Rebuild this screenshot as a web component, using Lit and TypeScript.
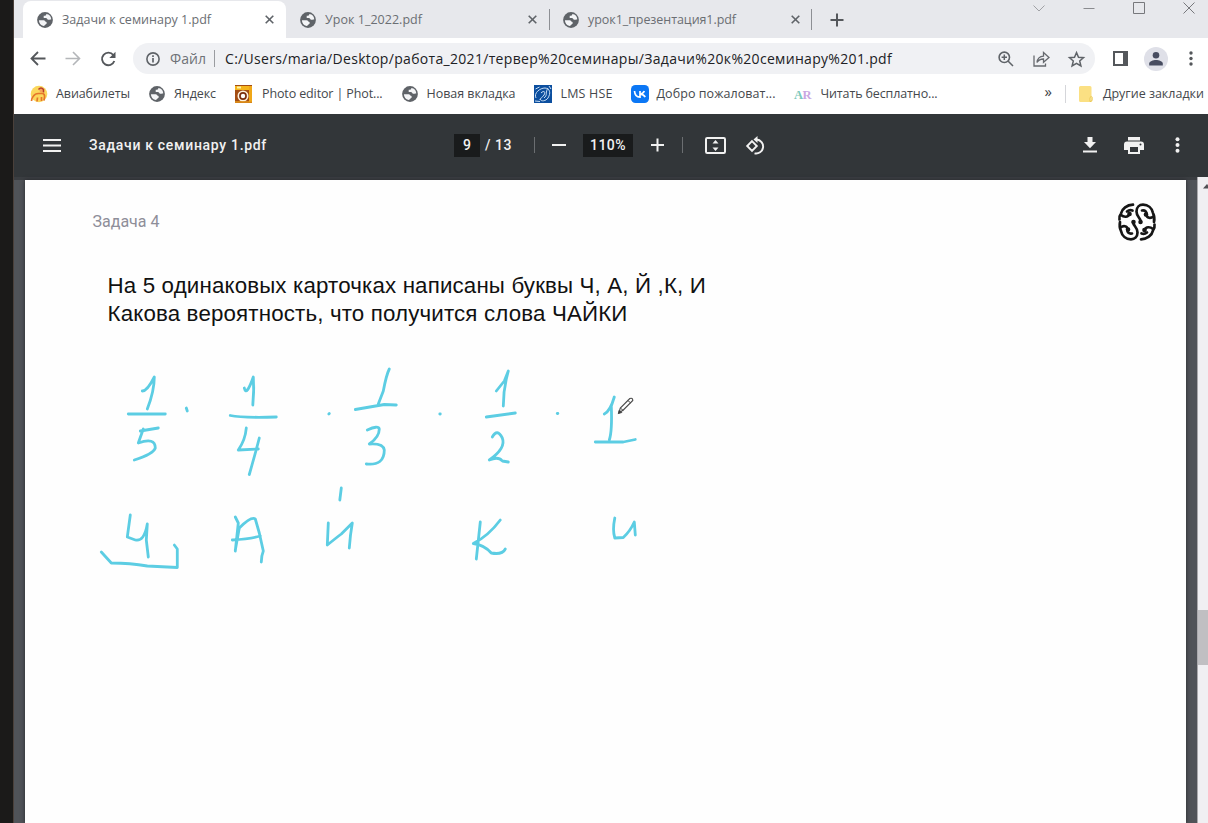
import { LitElement, html, svg, css } from "lit";
import { customElement, property } from "lit/decorators.js";

/* One line of text, letter-spaced so that it takes the given width. */
@customElement("fit-text")
class FitText extends LitElement {
  @property({ type: Number }) width = 0;
  @property() text = "";
  static styles = css`
    :host { display: block; white-space: pre; flex: none; }
    .line { display: inline-block; }
  `;
  render() {
    return html`<span class="line">${this.text}</span>`;
  }
  updated() {
    const line = this.renderRoot.querySelector(".line") as HTMLElement;
    line.style.letterSpacing = "0px";
    const natural = line.getBoundingClientRect().width;
    line.style.letterSpacing = (this.width - natural) / this.text.length + "px";
    this.style.width = this.width + "px";
  }
}

const fit = (text: string, width: number, cls = "") =>
  html`<fit-text class=${cls} text=${text} width=${width}></fit-text>`;

const globe = html`<svg class="globe" width="16" height="16" viewBox="0 0 16 16">
  <circle cx="8" cy="8" r="7.9" fill="#5f6368" />
  <path d="M1.9 8.2H6.6c1.6 0 1.6 1.9 3 1.9v1.7c-1.5.1-1.4 2.2-3 2.2A6.2 6.2 0 0 1 1.9 8.2z" fill="#f4f5f7" />
  <path d="M9.3 2c0 1.6-.8 1.8-2.6 1.8v2.1h2.2c1.2 0 1.2 1.7 2.4 1.9 1 .2 1.300-.6 2.900-.2C14.300 4.600 12.200 2.300 9.300 2z" fill="#f4f5f7" />
</svg>`;

const cross = html`<svg width="9" height="9" viewBox="0 0 9 9">
  <path d="M.7.7l7.600 7.600M8.300.7L.7 8.300" stroke="#5f6368" stroke-width="1.600" />
</svg>`;

const aviaIcon = html`<svg width="17" height="18" viewBox="0 0 17 18">
  <circle cx="9" cy="9" r="8.300" fill="#fbd75c" />
  <circle cx="11.500" cy="5.500" r="2" fill="#f6a45a" />
  <path d="M8.500 4.500q2.500-3 5 0v3" fill="none" stroke="#b8392b" stroke-width="1.500" />
  <path d="M1.500 16q0-3 2-5 1.500-2.500 5-2.500h3.500q3 0 2.500 4l-.5 3M7 16.500l.5-4M11.500 16v-4" fill="none" stroke="#e5762a" stroke-width="1.700" />
</svg>`;

const cameraIcon = html`<svg width="17" height="18" viewBox="0 0 17 18">
  <rect width="17" height="18" fill="#a44d12" />
  <rect y="1" width="17" height="4" fill="#f5b51b" />
  <rect x="2" y="1.500" width="4" height="2" fill="#fff2a8" />
  <rect x="14" y="1" width="3" height="16" fill="#f0a718" />
  <circle cx="8" cy="11" r="4.700" fill="#7c3010" stroke="#fff3df" stroke-width="1.600" />
  <circle cx="8" cy="11" r="2.200" fill="#fff" />
  <path d="M0 17h17" stroke="#e79a1c" stroke-width="1.500" />
</svg>`;

const hseIcon = html`<svg width="18" height="18" viewBox="0 0 18 18">
  <rect width="18" height="18" fill="#0c4f9f" />
  <path d="M2 13C-.5 8 6 3 11 3c5 .5 6 5 3 10-2 3-7 4-8 1M7 8c3-3 5-1 3 2s-4 3-4 5M14 3c-3 4 0 7-4 10M1.500 4l4-2M15 1l2 3M1 16l5 .5" fill="none" stroke="#c9def4" stroke-width="1" />
</svg>`;

const vkIcon = html`<svg width="18" height="18" viewBox="0 0 18 18">
  <rect width="18" height="18" rx="4.500" fill="#0b77f5" />
  <path d="M3.500 6c.3 4 2.200 6.200 5.500 6.200V6M9 9.200C11 9 12.500 8 13.300 6M9.300 9.200c2.200.2 3.900 1.200 4.900 3" fill="none" stroke="#fff" stroke-width="1.700" />
</svg>`;

const arIcon = html`<svg width="18" height="14" viewBox="0 0 18 14">
  <text class="ar" x="0" y="11.500" fill="#7bc9bb">A</text>
  <text class="ar" x="8.500" y="11.500" fill="#c9a6e2">R</text>
</svg>`;

/* The mark is symmetric under a half turn, so one half is drawn twice. */
const lobe = () => svg`
  <path d="M15 1.700C9 2 4 5.500 3 10.500Q1 13 1.500 16.500" />
  <path d="M3 12C6 14.500 10 14.500 11.500 11M9 8.500Q11.500 6.500 14.500 7.500" />
  <path d="M23 19C22.500 14.500 18.500 14 18.500 8.500C18.500 4 21.500 1.700 25 1.700C30 1.700 34 5 35 10Q37 14 36 19" />
  <path d="M24 7.500C27 7 29 8.500 28.500 11.500C28.500 15.500 33 15.500 35.500 13.500" />
  <circle cx="11.500" cy="11" r="1" />
  <circle cx="28" cy="11.500" r="1" />
  <circle cx="22.500" cy="19" r=".9" />`;
const logo = html`<svg class="logo" width="38" height="38" viewBox="0 0 38 38">
  <g fill="none" stroke="#161616" stroke-width="2.700" stroke-linecap="round">
    ${lobe()}
    <g transform="rotate(180 19 19)">${lobe()}</g>
  </g>
</svg>`;

/* Pen strokes, in the coordinates of the sheet's ink layer. */
const strokes = [
  "M142 391Q147 391 154 377Q154 391 147 409", "M128 414H165", "M140 431L158 428M143 429L138 443Q155 437 155 448Q153 454 134 460",
  "M186 408L187 411", "M244 388Q246 397 253 377Q254 390 252.500 405", "M230 415.500Q242 418 276 417",
  "M246 428Q245 440 238 450L258 449M259 438Q256 450 249 474.500", "M328.500 414L329 413.500",
  "M389 369Q386 375 383 391L378 404", "M355 409.500L384 404.500L396 405",
  "M367 430Q378 425 379 429Q379 437 369 444Q383 443 384 450Q384 466 366 464", "M439.500 414H440",
  "M496 391L504 381L508 371L506 379Q503 392 503 406", "M486 417L515 413",
  "M492 437Q497 428 502 438Q506 448 489 460Q498 456 502 461L508 462", "M557 413.500H557.500",
  "M604 414Q610 411 614 397L611 406Q612 431 609 440", "M595 442L623 442L635 439.500",
  "M130 515Q128 530 127 537L135 540Q144 542 147 524L146 540L148 557", "M101 552L111 563Q130 563 147 566L177 567.500V549L174 545",
  "M235 517L238 523L235 551M235 550L239 528Q251 516 255 519L259 533L263 551Q261 556 261 562M232 540Q250 539 260 536",
  "M341 488L339.500 500", "M328 523L327 545Q337 537 341 534L352 523Q350 534 349 548",
  "M480 522L476 559M500 520Q488 536 473 543.500Q484 545 491 553Q502 555 505 549", "M614.500 518Q612 530 614.500 538L623 537.500Q630 531 634 522L635 535",
];

@customElement("app-root")
class AppRoot extends LitElement {
  static styles = css`
    :host { display: block; width: 1208px; height: 823px; overflow: hidden; font-family: "Open Sans", "Noto Sans", sans-serif; }
    svg { display: block; flex: none; overflow: visible; }
    .screen { display: grid; grid-template-columns: 13px 1px 1194px; height: 823px; background: #fff; }
    .edge { background: #1b1a19; }
    .rim { background: #4a403a; }
    .window { display: grid; grid-template-rows: 38px 41px 34.500px 63.500px 646px; overflow: hidden; }

    .tabs { display: flex; background: #e7e8ec; color: #6b6e73; font-size: 12.500px; }
    .tab { display: flex; align-items: center; box-sizing: border-box; width: 263px; height: 38px; padding: 1px 12.500px 0 14px; }
    .tab.active { margin: 1px 0 0 9px; height: 37px; padding-top: 0; background: #fff; border-radius: 8px 8px 0 0; }
    .tab .globe { margin-right: 9px; }
    .tab .close { margin-left: auto; }
    .rule { width: 1px; height: 21px; margin: 9px 0 0 -1px; background: #8d8f94; }
    .rule.between { margin-left: 0; }
    .between + .tab { margin-left: -1px; }
    .add { margin: 13px 0 0 18px; }
    .controls { display: flex; margin-left: 189px; padding-top: 2px; }
    .controls svg { margin-right: 38px; }

    .nav { display: flex; align-items: center; padding-left: 16px; }
    .nav .icons { display: flex; gap: 19px; align-items: center; width: 103px; }
    .address { display: flex; align-items: center; box-sizing: border-box; width: 962px; height: 31px; padding-left: 12.500px; border-radius: 16px; background: #f0f1f4; font-size: 14px; color: #202124; }
    .scheme { color: #6f7277; margin-left: 10.500px; }
    .bar { width: 1px; height: 17px; margin: 0 10px 0 8px; background: #9a9ca0; }
    .zoom { margin-left: 106px; }
    .share { margin-left: 19px; }
    .star { margin-left: 18px; }
    .side { margin-left: 18px; }
    .avatar { margin-left: 16px; }
    .menu { margin-left: 21px; }

    .marks { display: flex; align-items: center; padding: 0 0 5px 16px; color: #45484c; font-size: 12.500px; }
    .marks .more { font-size: 15px; line-height: 15px; color: #3c4043; margin-left: 107px; margin-top: -4px; }
    .marks .split { width: 1px; height: 18px; margin: 0 13px; background: #d5d6da; }
    .ar { font: bold 12.500px "Liberation Serif", serif; }
    .g8 { margin-left: 8px; }
    .g9 { margin-left: 9px; }
    .g10 { margin-left: 10px; }
    .m18 { margin-left: 18px; }
    .m19 { margin-left: 19px; }

    .pdfbar { display: flex; align-items: center; background: #323639; color: #f1f1f1; font: 500 14px Roboto, sans-serif; padding-left: 28.500px; }
    .name { margin-left: 28.500px; }
    .field { display: flex; justify-content: center; align-items: center; height: 23px; background: #191b1c; }
    .page { width: 26px; margin-left: 187px; }
    .of { margin-left: 5px; }
    .tick { width: 1px; height: 16px; background: #6b6e71; }
    .first { margin-left: 22px; }
    .minus { margin-left: 17px; }
    .percent { width: 50px; margin-left: 17px; }
    .plus { margin: 0 18px; }
    .fitpage { margin-left: 22px; }
    .rotate { margin-left: 20px; }
    .download { margin-left: 316.500px; }
    .print { margin-left: 27px; }
    .dots { margin-left: 31.500px; }

    .viewer { display: grid; grid-template-columns: 10.500px 1161.500px 11px 11px; background: #505358; box-shadow: inset 0 3px 0 #3b3e42; }
    .sheet { position: relative; margin-top: 3px; height: 643px; background: #fefefe; box-shadow: 0 0 4px #26282b; }
    .head { display: flex; justify-content: space-between; padding: 23px 30.500px 0 68px; }
    .task { margin-top: 8px; font: 16px/22px Roboto, sans-serif; color: #8e8e99; }
    .body { padding: 31px 0 0 83px; font: 22.300px/27.500px "Liberation Sans", Arial, sans-serif; color: #111; }
    .ink { position: absolute; left: 0; top: 0; }
    .track { grid-column: 4; background: #f0eff2; border-left: 1px solid #aaa9ac; box-sizing: border-box; display: flex; flex-direction: column; }
    .arrow { margin: 7px 0 0 5px; }
    .thumb { height: 55px; margin-top: 421px; background: #c0bfc2; }
  `;

  tab(title: string, width: number, active = false) {
    return html`<div class="tab ${active ? "active" : ""}">${globe}${fit(title, width)}<span class="close">${cross}</span></div>`;
  }

  render() {
    return html`<div class="screen">
      <div class="edge"></div>
      <div class="rim"></div>
      <div class="window">
        <div class="tabs">
          ${this.tab("Задачи к семинару 1.pdf", 149, true)}
          ${this.tab("Урок 1_2022.pdf", 97)}
          <div class="rule between"></div>
          ${this.tab("урок1_презентация1.pdf", 148)}
          <div class="rule"></div>
          <svg class="add" width="14" height="14" viewBox="0 0 14 14"><path d="M7 .5v13M.5 7h13" stroke="#54575b" stroke-width="2" /></svg>
          <div class="controls">
            <svg width="12" height="12" viewBox="0 0 12 12"><path d="M.5 3.500L6 9l5.500-5.500" fill="none" stroke="#a0a1a5" /></svg>
            <svg width="12" height="12" viewBox="0 0 12 12"><path d="M.5 6.500h11" stroke="#8a8b8f" /></svg>
            <svg width="12" height="12" viewBox="0 0 12 12"><path d="M.5.5h11v11H.5z" fill="none" stroke="#77787c" /></svg>
            <svg width="12" height="12" viewBox="0 0 12 12"><path d="M.5.5l11 11M11.500.5l-11 11" stroke="#77787c" /></svg>
          </div>
        </div>

        <div class="nav">
          <div class="icons">
            <svg width="16" height="16" viewBox="0 0 16 16"><path d="M15.500 7.500H2M8 1L1.500 7.500 8 14" fill="none" stroke="#54575b" stroke-width="1.800" /></svg>
            <svg width="16" height="16" viewBox="0 0 16 16"><path d="M.5 7.500H14M8 1L14.500 7.500 8 14" fill="none" stroke="#b4b6b9" stroke-width="1.600" /></svg>
            <svg width="16" height="16" viewBox="0 0 16 16"><path d="M13.300 4A6.300 6.300 0 1 0 14.300 10" fill="none" stroke="#54575b" stroke-width="1.900" /><path d="M15.500.8V7H9.300z" fill="#54575b" /></svg>
          </div>
          <div class="address">
            <svg width="14" height="14" viewBox="0 0 14 14"><circle cx="7" cy="7" r="6.100" fill="none" stroke="#5f6368" stroke-width="1.600" /><path d="M7 6v4.500M7 3.300v1.600" stroke="#5f6368" stroke-width="1.700" /></svg>
            ${fit("Файл", 36, "scheme")}
            <div class="bar"></div>
            ${fit("C:/Users/maria/Desktop/работа_2021/тервер%20семинары/Задачи%20к%20семинару%201.pdf", 667)}
            <svg class="zoom" width="16" height="16" viewBox="0 0 16 16"><circle cx="6.300" cy="6.300" r="5.200" fill="none" stroke="#5f6368" stroke-width="1.600" /><path d="M10 10l5 5M6.300 3.600v5.400M3.600 6.300h5.400" fill="none" stroke="#5f6368" stroke-width="1.500" /></svg>
            <svg class="share" width="17" height="16" viewBox="0 0 17 16"><path d="M1 4.500V15h11.500v-2.500M4 11.500C4.500 7 7 5.300 10.500 5.100V1.500L16 6.500l-5.500 4.800V8C7.500 8 5.500 9 4 11.500z" fill="none" stroke="#66696e" stroke-width="1.300" /></svg>
            <svg class="star" width="17" height="16" viewBox="0 0 17 16"><path d="M8.500 1.600l2 4.700 5 .4-3.800 3.300 1.200 5-4.400-2.700-4.400 2.700 1.200-5L1.500 6.700l5-.4z" fill="none" stroke="#5f6368" stroke-width="1.500" /></svg>
          </div>
          <svg class="side" width="15" height="15" viewBox="0 0 15 15"><path d="M0 0h15v15H0zM2 2v11h8V2z" fill="#54575b" fill-rule="evenodd" /></svg>
          <svg class="avatar" width="24" height="24" viewBox="0 0 24 24"><circle cx="12" cy="12" r="12" fill="#dfe0e8" /><circle cx="12" cy="8.300" r="3.300" fill="#474c60" /><path d="M5.200 18.500v-2c0-2.300 4-3.500 6.800-3.500s6.800 1.200 6.800 3.500v2z" fill="#474c60" /></svg>
          <svg class="menu" width="4" height="15" viewBox="0 0 4 15"><g fill="#54575b"><circle cx="2" cy="2" r="1.700" /><circle cx="2" cy="7.500" r="1.700" /><circle cx="2" cy="13" r="1.700" /></g></svg>
        </div>

        <div class="marks">
          ${aviaIcon}${fit("Авиабилеты", 74, "g9")}
          <span class="m19">${globe}</span>${fit("Яндекс", 42, "g9")}
          <span class="m19">${cameraIcon}</span>${fit("Photo editor | Phot...", 120.5, "g10")}
          <span class="m19">${globe}</span>${fit("Новая вкладка", 89, "g9")}
          <span class="m18">${hseIcon}</span>${fit("LMS HSE", 52, "g9")}
          <span class="m18">${vkIcon}</span>${fit("Добро пожаловат...", 119, "g8")}
          <span class="m18">${arIcon}</span>${fit("Читать бесплатно...", 117, "g9")}
          <span class="more">»</span>
          <div class="split"></div>
          <svg width="14" height="16" viewBox="0 0 14 16"><path d="M0 1.500Q0 0 1.500 0H11q1.500 0 1.500 1.500V10l1 1v3q0 2-2 2h-10Q0 16 0 14.500z" fill="#fbe083" /><path d="M11 15v-3.500q1.500-2 2 0V14q0 1.500-2 1.500z" fill="#fff0b0" stroke="#e4bf48" stroke-width=".8" /></svg>
          ${fit("Другие закладки", 101, "g10")}
        </div>

        <div class="pdfbar">
          <svg width="18" height="13" viewBox="0 0 18 13"><path d="M0 1h18M0 6.500h18M0 12h18" stroke="#f1f1f1" stroke-width="2" /></svg>
          ${fit("Задачи к семинару 1.pdf", 178, "name")}
          <div class="field page">9</div>
          ${fit("/ 13", 27, "of")}
          <div class="tick first"></div>
          <svg class="minus" width="14" height="14" viewBox="0 0 14 14"><path d="M0 7h14" stroke="#f1f1f1" stroke-width="2" /></svg>
          <div class="field percent">${fit("110%", 36)}</div>
          <svg class="plus" width="13" height="14" viewBox="0 0 13 14"><path d="M0 7h13M6.500.5v13" stroke="#f1f1f1" stroke-width="2" /></svg>
          <div class="tick"></div>
          <svg class="fitpage" width="21" height="17" viewBox="0 0 21 17"><rect x="1" y="1" width="19" height="15" rx="1.200" fill="none" stroke="#f1f1f1" stroke-width="2" /><path d="M10.500 3l3 3.500h-6zM10.500 14l3-3.500h-6z" fill="#f1f1f1" /></svg>
          <svg class="rotate" width="20" height="19" viewBox="0 0 20 19"><path d="M6 5.200L10.800 10 6 14.800 1.200 10zM10.500 3.500a7 7 0 1 1-2 13.800" fill="none" stroke="#f1f1f1" stroke-width="1.900" /><path d="M11.500 0v7L7.500 3.500z" fill="#f1f1f1" /></svg>
          <svg class="download" width="14" height="16" viewBox="0 0 14 16"><path d="M4.500 0h5v5H13l-6 6.200L1 5h3.500zM0 13.500h14v2H0z" fill="#f1f1f1" /></svg>
          <svg class="print" width="20" height="17" viewBox="0 0 20 17"><path d="M4 0h12v3.500H4zM3 4.500h14q3 0 3 3V13h-4v4H4v-4H0V7.500q0-3 3-3zM6 10v5h8v-5z" fill="#f1f1f1" fill-rule="evenodd" /><circle cx="16.500" cy="7.500" r="1" fill="#323639" /></svg>
          <svg class="dots" width="5" height="16" viewBox="0 0 5 16"><g fill="#f1f1f1"><circle cx="2.500" cy="2.300" r="2" /><circle cx="2.500" cy="8" r="2" /><circle cx="2.500" cy="13.700" r="2" /></g></svg>
        </div>

        <div class="viewer">
          <div></div>
          <div class="sheet">
            <div class="head">
              ${fit("Задача 4", 67, "task")}
              ${logo}
            </div>
            <div class="body">
              ${fit("На 5 одинаковых карточках написаны буквы Ч, А, Й ,К, И", 598.5)}
              ${fit("Какова вероятность, что получится слова ЧАЙКИ", 520)}
            </div>
            <svg class="ink" width="1161" height="643" viewBox="24.700 180 1161 643">
              <g fill="none" stroke="#5ccde3" stroke-width="2.800" stroke-linecap="round" stroke-linejoin="round">
                ${strokes.map((d) => svg`<path d=${d} />`)}
              </g>
              <path d="M618.500 413l1.500-5 9.500-9.500q3-1 3 2L623 410z" fill="#fff" stroke="#4a4a4a" stroke-width="1.100" />
              <path d="M618 413.500l1-3.500 2.500 2.500zM620 408l3 2.500M627.500 400.500l3 2.500" fill="#333" stroke="#4a4a4a" />
            </svg>
          </div>
          <div class="track">
            <svg class="arrow" width="8" height="5" viewBox="0 0 8 5"><path d="M0 4.500L4 0l4 4.500z" fill="#505054" /></svg>
            <div class="thumb"></div>
          </div>
        </div>
      </div>
    </div>`;
  }
}
